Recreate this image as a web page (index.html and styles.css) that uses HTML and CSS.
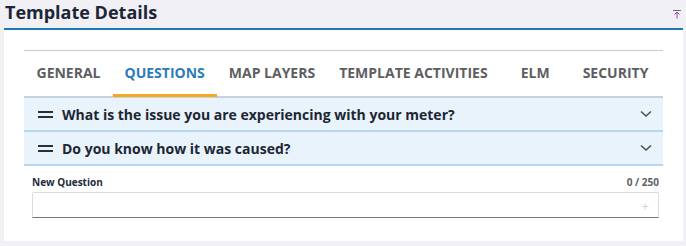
FILE: index.html
```html
<!DOCTYPE html>
<html lang="en">
<head>
    <meta charset="UTF-8">
    <meta name="viewport" content="width=device-width, initial-scale=1.0">
    <title>Template Details</title>
    <link rel="stylesheet" href="styles.css">
</head>
<body>
    <div class="page-header">
        <h1>Template Details</h1>
        <button class="collapse-btn" title="Collapse">
            <svg width="10" height="10" viewBox="0 0 10 10">
                <path d="M1 1.5h8" stroke="#6b6b7a" stroke-width="1"/>
                <path d="M5 3v6.5M2.5 5.5L5 3l2.5 2.5" stroke="#9b3fb0" stroke-width="1" fill="none"/>
            </svg>
        </button>
    </div>

    <div class="card">
        <div class="tabs">
            <div class="tab">General</div>
            <div class="tab active">Questions</div>
            <div class="tab">Map Layers</div>
            <div class="tab">Template Activities</div>
            <div class="tab">ELM</div>
            <div class="tab">Security</div>
        </div>

        <div class="question-list">
            <div class="question">
                <span class="handle"></span>
                <span class="question-text">What is the issue you are experiencing with your meter?</span>
                <svg class="chevron" width="12" height="8" viewBox="0 0 12 8">
                    <path d="M1 1.5l5 4.5 5-4.5" stroke="#4a4f57" stroke-width="1.6" fill="none"/>
                </svg>
            </div>
            <div class="question">
                <span class="handle"></span>
                <span class="question-text">Do you know how it was caused?</span>
                <svg class="chevron" width="12" height="8" viewBox="0 0 12 8">
                    <path d="M1 1.5l5 4.5 5-4.5" stroke="#4a4f57" stroke-width="1.6" fill="none"/>
                </svg>
            </div>
        </div>

        <div class="new-question">
            <div class="field-head">
                <label for="newQuestion">New Question</label>
                <span class="counter">0 / 250</span>
            </div>
            <div class="field">
                <input type="text" id="newQuestion" maxlength="250">
                <span class="add">+</span>
            </div>
        </div>
    </div>
</body>
</html>
```

FILE: styles.css
```css
* {
    margin: 0;
    padding: 0;
    box-sizing: border-box;
}

body {
    font-family: "Open Sans", "Noto Sans", Arial, sans-serif;
    background: #f1f0f5;
    padding: 0 3px 3px 4px;
    color: #1f2937;
}

.page-header {
    display: flex;
    justify-content: space-between;
    align-items: flex-start;
    height: 28px;
    padding-left: 1px;
}

h1 {
    font-size: 18px;
    font-weight: 700;
    color: #1c2636;
    line-height: 24px;
}

.collapse-btn {
    border: none;
    background: none;
    margin-top: 9px;
    margin-right: 1px;
    width: 10px;
    height: 10px;
    display: flex;
}

.card {
    background: #fff;
    border-top: 2px solid #1f78b4;
    padding: 20px 20px 24px 20px;
    height: 213px;
}

.tabs {
    display: flex;
    border-top: 1px solid #c9c9c9;
    height: 48px;
    border-bottom: 2px solid #c4d3df;
}

.tab {
    min-width: 70px;
    padding: 0 12px;
    display: flex;
    align-items: center;
    justify-content: center;
    white-space: nowrap;
    font-size: 14px;
    font-weight: 700;
    text-transform: uppercase;
    color: #5e5e62;
    border-bottom: 3px solid transparent;
    margin-bottom: -1px;
}

.tab:first-child {
    padding-left: 12.5px;
}

.tab:nth-child(5) {
    min-width: 71px;
}

.tab.active {
    color: #2b7bb9;
    border-bottom-color: #f7a823;
}

.question {
    display: flex;
    align-items: center;
    height: 34px;
    background: #e8f3fb;
    border-bottom: 2px solid #b6d8ef;
    padding: 0 11px 0 14px;
}

.handle {
    width: 15px;
    height: 7px;
    border-top: 2px solid #2a2e35;
    border-bottom: 2px solid #2a2e35;
    margin-right: 9px;
}

.question-text {
    flex: 1;
    font-size: 14px;
    font-weight: 700;
    color: #1d2633;
}

.new-question {
    padding: 9px 4px 0 8px;
}

.field-head {
    display: flex;
    justify-content: space-between;
    font-size: 10px;
    font-weight: 700;
    line-height: 14px;
}

.field-head label {
    color: #1e2b3b;
}

.counter {
    color: #5b5f66;
}

.field {
    position: relative;
    margin-top: 3px;
    height: 26px;
    border: 1px solid #dcdcdc;
    border-bottom: 1px solid #767676;
    border-radius: 2px 2px 0 0;
}

.field input {
    width: 100%;
    height: 100%;
    border: none;
    outline: none;
    background: transparent;
    padding: 0 24px 0 8px;
    font: inherit;
    font-size: 13px;
}

.add {
    position: absolute;
    right: 9px;
    top: 4px;
    font-size: 13px;
    color: #d4d4d4;
}
```
